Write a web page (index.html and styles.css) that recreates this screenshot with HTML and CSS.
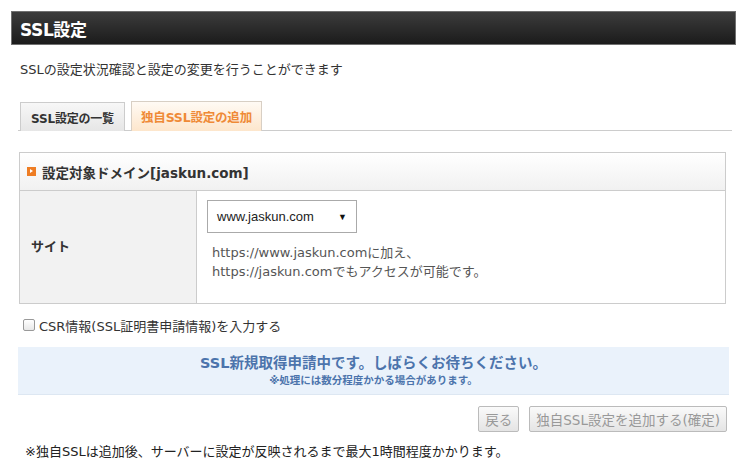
FILE: index.html
```html
<!DOCTYPE html>
<html lang="ja">
<head>
<meta charset="utf-8">
<title>SSL設定</title>
<link rel="stylesheet" href="styles.css">
</head>
<body>
<div class="page">
  <div class="title-bar">SSL設定</div>
  <p class="desc">SSLの設定状況確認と設定の変更を行うことができます</p>
  <div class="tabs">
    <div class="tab">SSL設定の一覧</div>
    <div class="tab active">独自SSL設定の追加</div>
  </div>
  <div class="box">
    <div class="box-head"><span class="mark"></span>設定対象ドメイン[jaskun.com]</div>
    <div class="row">
      <div class="label">サイト</div>
      <div class="value">
        <div class="select"><span>www.jaskun.com</span><span class="caret">▼</span></div>
        <p class="note">https://www.jaskun.comに加え、<br>https://jaskun.comでもアクセスが可能です。</p>
      </div>
    </div>
  </div>
  <label class="check"><span class="cb"></span>CSR情報(SSL証明書申請情報)を入力する</label>
  <div class="info">
    <div class="info-main">SSL新規取得申請中です。しばらくお待ちください。</div>
    <div class="info-sub">※処理には数分程度かかる場合があります。</div>
  </div>
  <div class="buttons">
    <div class="btn">戻る</div>
    <div class="btn">独自SSL設定を追加する(確定)</div>
  </div>
  <p class="foot">※独自SSLは追加後、サーバーに設定が反映されるまで最大1時間程度かかります。</p>
</div>
</body>
</html>
```
FILE: styles.css
```css
* { box-sizing: border-box; }
body {
  margin: 0;
  background: #fff;
  color: #333;
  font-family: "DejaVu Sans", "Noto Sans CJK JP", sans-serif;
  font-size: 13px;
}
.page { padding: 11px 12px 0 11px; }
.title-bar {
  height: 34px;
  border: 1px solid #707070;
  background: linear-gradient(#3c3c3c, #1b1b1b);
  color: #fff;
  font-weight: bold;
  font-size: 17px;
  padding-left: 8px;
  display: flex;
  align-items: center;
  letter-spacing: -0.4px;
}
.desc {
  margin: 16px 0 0 9px;
  line-height: 18px;
  font-size: 13px;
}
.tabs {
  display: flex;
  gap: 6px;
  margin: 22px 4px 0 7px;
  padding-left: 2px;
  border-bottom: 1px solid #ccc;
  height: 30px;
}
.tab {
  width: 105px;
  height: 29px;
  margin-top: 1px;
  border: 1px solid #ccc;
  border-bottom: none;
  background: linear-gradient(#f7f7f7, #e6e6e6);
  font-weight: bold;
  font-size: 12px;
  display: flex;
  align-items: center;
  justify-content: center;
  letter-spacing: -0.2px;
}
.tab.active {
  width: 131px;
  height: 30px;
  margin-top: 0;
  background: linear-gradient(#fffaf4, #fde6cc);
  border-color: #d8cfc4;
  color: #ef8a37;
  font-size: 12.5px;
}
.box {
  margin: 21px 10px 0 8px;
  border: 1px solid #ccc;
}
.box-head {
  height: 38px;
  border-bottom: 1px solid #ccc;
  background: linear-gradient(#ffffff, #f1f1f1);
  display: flex;
  align-items: center;
  padding-left: 7px;
  font-weight: bold;
  font-size: 13.5px;
}
.mark {
  width: 9px;
  height: 9px;
  background: #ee7d24;
  margin-right: 6px;
  position: relative;
}
.mark::after {
  content: "";
  position: absolute;
  left: 3px;
  top: 2px;
  border-left: 3px solid #fff;
  border-top: 2.5px solid transparent;
  border-bottom: 2.5px solid transparent;
}
.row { display: flex; height: 112px; }
.label {
  width: 177px;
  background: #f2f2f2;
  border-right: 1px solid #ccc;
  display: flex;
  align-items: center;
  padding: 0 0 4px 11px;
  font-weight: bold;
  font-size: 13px;
}
.value { padding: 9px 0 0 10px; }
.select {
  width: 150px;
  height: 33px;
  border: 1px solid #aaa;
  display: flex;
  align-items: center;
  justify-content: space-between;
  padding: 0 9px 0 9px;
  font-family: "Liberation Sans", "Noto Sans CJK JP", sans-serif;
  font-size: 13px;
  color: #222;
}
.caret { font-size: 9px; color: #111; }
.note {
  margin: 10px 0 0 5px;
  line-height: 19px;
  font-size: 13px;
  color: #555;
}
.check {
  display: flex;
  align-items: center;
  margin: 12px 0 0 12px;
  height: 18px;
  font-size: 13px;
}
.cb {
  width: 12px;
  height: 12px;
  border: 1px solid #999;
  border-radius: 2px;
  background: linear-gradient(#fff, #e8e8e8);
  margin-right: 4px;
}
.info {
  margin: 13px 7px 0 7px;
  height: 48px;
  background: #eaf2fb;
  border-bottom: 1px solid #dde7f2;
  text-align: center;
  padding-top: 6px;
}
.info-main {
  color: #4c74ac;
  font-weight: bold;
  font-size: 14.5px;
  line-height: 20px;
}
.info-sub {
  color: #4c74ac;
  font-weight: bold;
  font-size: 10.5px;
  line-height: 14px;
}
.buttons {
  display: flex;
  justify-content: flex-end;
  gap: 10px;
  margin: 11px 9px 0 0;
}
.btn {
  height: 26px;
  border: 1px solid #bbb;
  border-radius: 2px;
  background: linear-gradient(#fafafa, #e4e4e4);
  color: #999;
  font-size: 13.5px;
  padding: 0 6px;
  display: flex;
  align-items: center;
}
.foot {
  margin: 11px 0 0 14px;
  line-height: 18px;
  font-size: 13px;
  color: #222;
}
```
